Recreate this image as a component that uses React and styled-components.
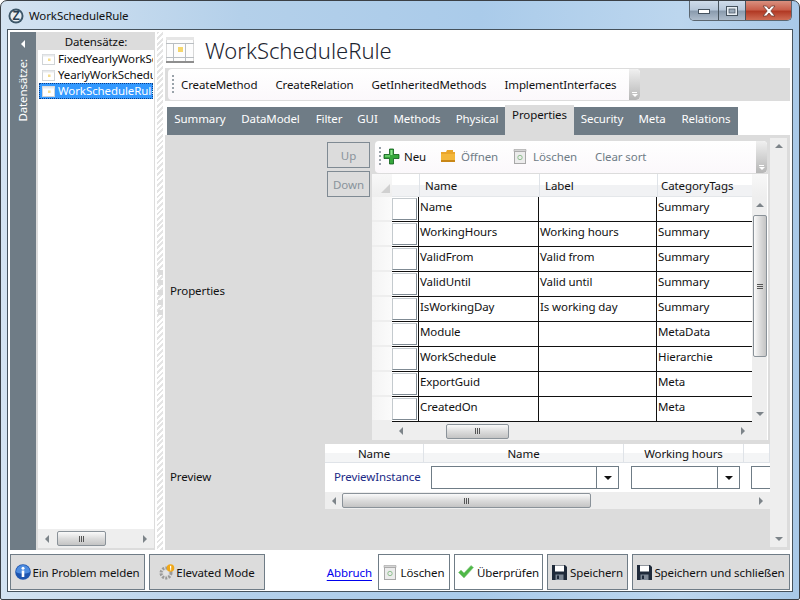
import React from 'react';
import styled, { createGlobalStyle } from 'styled-components';

const Global = createGlobalStyle`
  html, body { margin: 0; padding: 0; background: #fff; }
  * { box-sizing: border-box; }
  body { font-family: "Noto Sans", "Open Sans", sans-serif; font-size: 11.5px; letter-spacing: -0.1px; color: #111; }
  svg { flex: none; }
`;

const slate = '#6f7c86';
const panel = '#dcdcdc';
const barBg = '#eeeeee';

const Frame = styled.div`
  width: 800px;
  height: 600px;
  overflow: hidden;
  display: flex;
  flex-direction: column;
  border: 1px solid #3b4046;
  border-radius: 7px 7px 2px 2px;
  background: linear-gradient(90deg, #d4e3f1 0%, #b4d0ea 30%, #aacbea 60%, #bcd6ee 85%, #a9c9e8 100%);
`;

const TitleBar = styled.div`
  height: 28px;
  flex: none;
  display: flex;
  align-items: flex-start;
  padding-left: 7px;
`;

const LogoWrap = styled.div`
  margin-top: 7px;
  height: 16px;
  flex: none;
`;

const TitleText = styled.div`
  line-height: 29px;
  margin-left: 5px;
  color: #111;
`;

const WinButtons = styled.div`
  margin-left: auto;
  margin-right: 7px;
  display: flex;
  height: 20px;
  border: 1px solid #5b6670;
  border-top: 0;
  border-radius: 0 0 5px 5px;
  overflow: hidden;
`;

const WinButton = styled.div`
  width: ${p => p.$w}px;
  display: flex;
  align-items: center;
  justify-content: center;
  border-left: ${p => (p.$first ? '0' : '1px solid #46525c')};
  background: ${p => (p.$close
    ? 'linear-gradient(#d9907f 0%, #c9604c 45%, #b23a25 55%, #cf6d55 100%)'
    : 'linear-gradient(#cfdcea 0%, #b8c8da 45%, #8b9cae 55%, #aebccb 100%)')};
`;

const Client = styled.div`
  flex: none;
  margin: 0 6px;
  height: 563px;
  border: 1px solid #46525c;
  background: #fff;
  padding: 2px 2px 0 2px;
  display: flex;
  flex-direction: column;
`;

const Work = styled.div`
  height: 518px;
  flex: none;
  display: flex;
`;

const CollapseBar = styled.div`
  width: 26px;
  flex: none;
  background: ${slate};
  display: flex;
  flex-direction: column;
  align-items: center;
  padding-top: 8px;
  gap: 11px;
  color: #fff;
`;

const VerticalLabel = styled.div`
  writing-mode: vertical-rl;
  transform: rotate(180deg);
  line-height: 14px;
`;

const SidePanel = styled.div`
  width: 119px;
  flex: none;
  background: ${panel};
  padding: 0 1px 2px 2px;
  display: flex;
  flex-direction: column;
`;

const SideHeader = styled.div`
  height: 18px;
  line-height: 20px;
  text-align: center;
  flex: none;
`;

const SideList = styled.div`
  flex: 1;
  background: #fff;
  display: flex;
  flex-direction: column;
  overflow: hidden;
`;

const SideItems = styled.div`
  flex: 1;
  padding: 1px 1px 0;
`;

const SideItem = styled.div`
  height: 16px;
  display: flex;
  align-items: center;
  padding-left: 3px;
  gap: 3px;
  white-space: nowrap;
  overflow: hidden;
  line-height: 16px;
  color: ${p => (p.$selected ? '#fff' : '#111')};
  background: ${p => (p.$selected ? '#3399ff' : 'transparent')};
  outline: ${p => (p.$selected ? '1px dotted #0a3f8c' : 'none')};
  outline-offset: -1px;
`;

const Splitter = styled.div`
  width: 10px;
  flex: none;
  display: flex;
  flex-direction: column;
  align-items: center;
  justify-content: center;
  gap: 5px;
  padding-top: 2px;
  background: repeating-linear-gradient(135deg, #e4e4e4 0 2px, #fff 2px 4px);
  background-size: 6px 100%;
  background-repeat: no-repeat;
  background-position: 2px 0;
`;

const Grip = styled.div`
  width: 5px;
  height: 5px;
  background: ${panel};
`;

const Main = styled.div`
  width: 625px;
  flex: none;
  display: flex;
  flex-direction: column;
`;

const Heading = styled.div`
  height: 36px;
  flex: none;
  display: flex;
  align-items: center;
  gap: 11px;
  padding-left: 1px;
`;

const HeadingText = styled.div`
  font-size: 22px;
  letter-spacing: 0;
  font-weight: 300;
  color: #1c2430;
  line-height: 36px;
`;

const ToolBand = styled.div`
  height: 33px;
  flex: none;
  background: ${panel};
  padding: 1px 0 1px 3px;
  display: flex;
`;

const ToolBox = styled.div`
  display: flex;
  align-items: center;
  height: ${p => p.$h}px;
  width: ${p => p.$w}px;
  flex: none;
  background: linear-gradient(#ffffff, #fbf8fb);
  border-radius: 4px;
  overflow: hidden;
`;

const ToolDots = styled.div`
  width: 2px;
  height: 20px;
  margin-left: 4px;
  flex: none;
  background: repeating-linear-gradient(#9aa3aa 0 2px, transparent 2px 4px);
`;

const ToolItems = styled.div`
  flex: 1;
  display: flex;
  align-items: center;
  gap: ${p => p.$gap}px;
  padding-left: ${p => p.$pad}px;
  padding-bottom: ${p => p.$lift || 0}px;
`;

const ToolAction = styled.div`
  display: flex;
  align-items: center;
  gap: ${p => p.$gap || 5}px;
  margin-left: ${p => p.$push || 0}px;
  white-space: nowrap;
  color: ${p => (p.$disabled ? '#6f7c86' : '#111')};
`;

const ToolOverflow = styled.div`
  width: 11px;
  height: 100%;
  flex: none;
  margin-left: auto;
  background: linear-gradient(#f0f0f0, #b6b6b6);
  border-radius: 0 4px 4px 0;
  display: flex;
  flex-direction: column;
  align-items: center;
  justify-content: flex-end;
  padding-bottom: 3px;
  gap: 1px;
`;

const OverflowBar = styled.div`
  width: 5px;
  height: 1px;
  background: #fff;
`;

const OverflowArrow = styled.div`
  width: 0;
  height: 0;
  border-left: 3px solid transparent;
  border-right: 3px solid transparent;
  border-top: 3px solid #fff;
`;

const TabStrip = styled.div`
  margin: 6px 0 0 2px;
  height: 28px;
  flex: none;
  width: 571px;
  display: flex;
  background: ${slate};
`;

const Tab = styled.div`
  width: ${p => p.$w}px;
  flex: none;
  text-align: center;
  white-space: nowrap;
  color: ${p => (p.$active ? '#111' : '#fff')};
  background: ${p => (p.$active ? panel : 'transparent')};
  margin-top: ${p => (p.$active ? '-2px' : '0')};
  height: ${p => (p.$active ? '30px' : '28px')};
  line-height: ${p => (p.$active ? '19px' : '23px')};
`;

const TabBody = styled.div`
  flex: 1;
  background: ${panel};
  display: flex;
  min-height: 0;
  padding-right: 2px;
`;

const FormArea = styled.div`
  width: 605px;
  flex: none;
  display: flex;
  flex-direction: column;
  padding-top: 6px;
  gap: 4px;
`;

const FormRow = styled.div`
  display: grid;
  grid-template-columns: 160px 1fr;
  height: ${p => p.$h}px;
  flex: none;
`;

const FormLabel = styled.div`
  display: flex;
  align-items: center;
  padding-left: 5px;
`;

const PropsValue = styled.div`
  display: flex;
  padding: 0 2px;
  gap: 2px;
`;

const UpDown = styled.div`
  width: 43px;
  flex: none;
  padding-top: 1px;
  display: flex;
  flex-direction: column;
  gap: 3px;
`;

const SmallButton = styled.div`
  height: 26px;
  border: 1px solid #7f8a93;
  display: flex;
  align-items: center;
  justify-content: center;
  color: #89939b;
`;

const GridColumn = styled.div`
  flex: 1;
  display: flex;
  flex-direction: column;
  min-width: 0;
`;

const ToolOffset = styled.div`
  padding: 0 0 1px 3px;
  flex: none;
`;

const DataGrid = styled.div`
  flex: 1;
  display: grid;
  grid-template-columns: 20px 27px 120px 118px 95px 15px;
  grid-template-rows: 23px repeat(9, 25px) 18px;
  background: #fff;
`;

const Corner = styled.div`
  background: linear-gradient(#f8f8f8, #eeeeee);
  display: flex;
  align-items: flex-end;
  justify-content: flex-end;
  padding: 0 2px 4px 0;
`;

const CornerMark = styled.div`
  width: 0;
  height: 0;
  border-left: 9px solid transparent;
  border-bottom: 9px solid #d0d0d0;
`;

const HeadCell = styled.div`
  background: linear-gradient(#ffffff 50%, #f1f2f4 50%);
  border-left: ${p => (p.$plain ? '0' : '1px solid #dfe3e8')};
  border-bottom: 1px solid #e4e7ea;
  padding-left: ${p => p.$pad || 5}px;
  line-height: 23px;
  white-space: nowrap;
`;

const RowGutter = styled.div`
  background: linear-gradient(90deg, #f4f4f4, #fbfbfb);
  border-bottom: 2px solid #eeeeee;
`;

const RowSelector = styled.div`
  padding: 1px 1px 1px 0;
  border-bottom: 1px solid #111;
  border-right: 1px solid #111;
  background: #fff;
`;

const SelectorBox = styled.div`
  height: 100%;
  border: 1px solid #7f8a93;
  border-left-color: #c4cace;
  border-top-color: #c4cace;
`;

const Cell = styled.div`
  border-bottom: 1px solid #111;
  border-right: ${p => (p.$last ? '0' : '1px solid #111')};
  padding-left: 1px;
  line-height: 19px;
  white-space: nowrap;
  overflow: hidden;
`;

const VBar = styled.div`
  grid-column: 6;
  grid-row: 2 / 11;
  background: ${barBg};
  display: flex;
  flex-direction: column;
  align-items: center;
`;

const GridHBarSpacer = styled.div`
  background: ${barBg};
`;

const GridHBar = styled.div`
  grid-column: 2 / 6;
  background: ${barBg};
  display: flex;
  align-items: center;
  height: 18px;
`;

const GridCornerEnd = styled.div`
  background: ${barBg};
`;

const Arrow = styled.div`
  width: 0;
  height: 0;
  flex: none;
  ${p => p.$dir === 'up' && `border-left: 4px solid transparent; border-right: 4px solid transparent; border-bottom: 4px solid ${p.$color || '#7d8489'};`}
  ${p => p.$dir === 'down' && `border-left: 4px solid transparent; border-right: 4px solid transparent; border-top: 4px solid ${p.$color || '#7d8489'};`}
  ${p => p.$dir === 'left' && `border-top: 4px solid transparent; border-bottom: 4px solid transparent; border-right: 4px solid ${p.$color || '#7d8489'};`}
  ${p => p.$dir === 'right' && `border-top: 4px solid transparent; border-bottom: 4px solid transparent; border-left: 4px solid ${p.$color || '#7d8489'};`}
`;

const HTrack = styled.div`
  flex: 1;
  height: 100%;
  display: flex;
  align-items: center;
  padding: 0 7px;
`;

const HThumbSlot = styled.div`
  flex: 1;
  min-width: 0;
  padding-left: ${p => p.$before}px;
  padding-right: ${p => p.$after}px;
`;

const HThumb = styled.div`
  height: 15px;
  border: 1px solid #8a9299;
  border-radius: 2px;
  background: linear-gradient(#fafafa, #dcdcdc 50%, #c4c4c4);
  display: flex;
  align-items: center;
  justify-content: center;
  gap: 1px;
`;

const GripLine = styled.div`
  width: 1px;
  height: 6px;
  background: #555;
`;

const VThumb = styled.div`
  width: 14px;
  height: 142px;
  margin-top: 8px;
  border: 1px solid #8a9299;
  border-radius: 2px;
  background: linear-gradient(90deg, #fafafa, #dcdcdc 50%, #c4c4c4);
  display: flex;
  flex-direction: column;
  align-items: center;
  justify-content: center;
  gap: 1px;
`;

const VGripLine = styled.div`
  width: 6px;
  height: 1px;
  background: #555;
`;

const VBarFill = styled.div`
  flex: 1;
`;

const ArrowTop = styled.div`
  padding: 6px 0 0;
  line-height: 0;
`;

const ArrowBottom = styled.div`
  padding: 0 0 6px;
  line-height: 0;
`;

const PreviewBox = styled.div`
  display: flex;
  flex-direction: column;
  overflow: hidden;
  width: 445px;
`;

const PreviewHead = styled.div`
  display: grid;
  grid-template-columns: 99px 200px 120px 26px;
  height: 19px;
  flex: none;
  background: linear-gradient(#ffffff 50%, #f4f5f6 50%);
  border-bottom: 1px solid #dfe3e8;
`;

const PreviewHeadCell = styled.div`
  text-align: center;
  line-height: 19px;
  border-right: 1px solid #dfe3e8;
`;

const PreviewRow = styled.div`
  display: grid;
  grid-template-columns: 99px 200px 120px 26px;
  height: 29px;
  flex: none;
  background: #fff;
  align-items: center;
`;

const PreviewName = styled.div`
  padding-left: 9px;
  color: #1b2a86;
  white-space: nowrap;
  margin-top: -2px;
`;

const ComboCell = styled.div`
  padding-left: 7px;
  padding-right: ${p => p.$right}px;
`;

const Combo = styled.div`
  height: 23px;
  border: 1px solid ${slate};
  display: flex;
  justify-content: flex-end;
  ${p => p.$open && 'border-right: 0;'}
`;

const ComboButton = styled.div`
  width: 22px;
  border-left: 1px solid ${slate};
  display: flex;
  align-items: center;
  justify-content: center;
`;

const ComboArrow = styled.div`
  width: 0;
  height: 0;
  border-left: 4px solid transparent;
  border-right: 4px solid transparent;
  border-top: 4px solid #111;
`;

const HBarRow = styled.div`
  height: ${p => p.$h}px;
  flex: none;
  background: ${barBg};
  display: flex;
  align-items: center;
`;

const PageBar = styled.div`
  width: 17px;
  flex: none;
  margin: 3px 0;
  background: ${barBg};
  display: flex;
  flex-direction: column;
  align-items: center;
  justify-content: space-between;
  padding: 6px 0;
`;

const Footer = styled.div`
  flex: none;
  display: flex;
  padding-top: 4px;
  height: 41px;
  align-items: flex-start;
`;

const FootGroup = styled.div`
  display: flex;
  gap: 4px;
  align-items: center;
`;

const FootSpacer = styled.div`
  flex: 1;
`;

const FootButton = styled.div`
  height: 36px;
  width: ${p => p.$w}px;
  flex: none;
  border: 1px solid ${slate};
  background: ${p => (p.$white ? '#fff' : panel)};
  display: flex;
  align-items: center;
  justify-content: center;
  gap: ${p => p.$gap || 1}px;
  white-space: nowrap;
  color: #111;
`;

const CancelLink = styled.a`
  color: #0000ee;
  text-decoration: underline;
  margin-right: 2px;
  text-underline-offset: 3px;
`;

const Hbar = ({ before, after }) => (
  <HTrack>
    <Arrow $dir="left" />
    <HThumbSlot $before={before} $after={after}>
      <HThumb><GripLine /><GripLine /><GripLine /></HThumb>
    </HThumbSlot>
    <Arrow $dir="right" />
  </HTrack>
);

const RecordIcon = () => (
  <svg width="13" height="13" viewBox="0 0 13 13">
    <rect x="0.5" y="1.5" width="12" height="10" fill="#fff" stroke="#cfd3d6" />
    <rect x="0.5" y="1.5" width="12" height="2" fill="#e8eaec" />
    <rect x="6" y="5.5" width="2.5" height="2.5" fill="#f5dc8c" />
  </svg>
);

const LogoIcon = () => (
  <svg width="16" height="16" viewBox="0 0 16 16">
    <circle cx="8" cy="8" r="7.5" fill="#3c5668" />
    <circle cx="8" cy="8" r="5.6" fill="#e9eef2" />
    <text x="8" y="12" textAnchor="middle" fontSize="12" fontWeight="700" fontFamily="Liberation Sans" fill="#2a3f50">Z</text>
  </svg>
);

const HeadingIcon = () => (
  <svg width="28" height="26" viewBox="0 0 28 26">
    <rect x="0.5" y="0.5" width="27" height="24" fill="#fdfdfd" stroke="#d8d8d8" />
    <rect x="0" y="0" width="28" height="3" fill="#e6e6e6" />
    <rect x="0" y="24" width="28" height="2" fill="#8e8e8e" />
    <path d="M0 6.5H28M0 20.5H28M7.5 6V24M19.5 6V24" stroke="#b9bec2" fill="none" />
    <rect x="12" y="10" width="5" height="5" fill="#f5d76e" />
  </svg>
);

const PlusIcon = () => (
  <svg width="17" height="17" viewBox="0 0 17 17">
    <path d="M6.5 1h4v5.5H16v4h-5.5V16h-4v-5.5H1v-4h5.5z" fill="#36a83c" stroke="#0c5a18" strokeWidth="0.8" />
    <path d="M7.5 2h2v5h-2zM2 7.5h5v1H2z" fill="#8fe38f" />
  </svg>
);

const FolderIcon = () => (
  <svg width="14" height="12" viewBox="0 0 14 12">
    <path d="M0 2h5l1-2h6v2h2v10H0z" fill="#e9a52a" />
    <rect x="0" y="4" width="14" height="8" fill="#f4b73a" />
    <rect x="0" y="10" width="14" height="2" fill="#c98716" />
  </svg>
);

const TrashIcon = () => (
  <svg width="14" height="16" viewBox="0 0 14 16">
    <rect x="1.5" y="3.5" width="11" height="12" fill="#ececec" stroke="#a8a8a8" />
    <path d="M1 1.5h12v2H1z" fill="#d4d4d4" stroke="#a0a0a0" strokeWidth="0.6" />
    <circle cx="7" cy="9.5" r="2.2" fill="none" stroke="#8fbf8f" />
  </svg>
);

const InfoIcon = () => (
  <svg width="16" height="16" viewBox="0 0 16 16">
    <circle cx="8" cy="8" r="7.8" fill="#1d55b0" />
    <path d="M1 8a7 7 0 0 1 14 0c-3 2-11 2-14 0z" fill="#4d8ce0" />
    <rect x="6.7" y="6.5" width="2.6" height="6.5" fill="#fff" />
    <circle cx="8" cy="4.2" r="1.5" fill="#fff" />
  </svg>
);

const GearIcon = () => (
  <svg width="16" height="16" viewBox="0 0 16 16">
    <circle cx="7" cy="9" r="5" fill="none" stroke="#9a9a9a" strokeWidth="3" strokeDasharray="2 1.2" />
    <circle cx="7" cy="9" r="2.4" fill="#e4e4e4" />
    <circle cx="11.5" cy="4" r="3.8" fill="#f0a818" />
    <rect x="11" y="1.8" width="1.2" height="3" fill="#fff" />
    <rect x="11" y="5.3" width="1.2" height="1.1" fill="#fff" />
  </svg>
);

const CheckIcon = () => (
  <svg width="16" height="14" viewBox="0 0 16 14">
    <path d="M0.5 7.5L3 5l3 3 7-7.5 2.5 2L6 13z" fill="#4fb848" stroke="#8fc98c" strokeWidth="0.6" />
  </svg>
);

const FloppyIcon = () => (
  <svg width="15" height="15" viewBox="0 0 15 15">
    <path d="M0 0h13l2 2v13H0z" fill="#1f2a3a" />
    <rect x="3" y="0.5" width="9" height="6" fill="#fff" />
    <rect x="3.5" y="9.5" width="8" height="5.5" fill="#7d8794" />
    <rect x="5" y="10.5" width="2" height="3.5" fill="#1f2a3a" />
  </svg>
);

const rows = [
  ['Name', '', 'Summary'],
  ['WorkingHours', 'Working hours', 'Summary'],
  ['ValidFrom', 'Valid from', 'Summary'],
  ['ValidUntil', 'Valid until', 'Summary'],
  ['IsWorkingDay', 'Is working day', 'Summary'],
  ['Module', '', 'MetaData'],
  ['WorkSchedule', '', 'Hierarchie'],
  ['ExportGuid', '', 'Meta'],
  ['CreatedOn', '', 'Meta'],
];

const tabs = [
  ['Summary', 66], ['DataModel', 75], ['Filter', 42], ['GUI', 35], ['Methods', 64],
  ['Physical', 56], ['Properties', 69, true], ['Security', 56], ['Meta', 44], ['Relations', 64],
];

export default function App() {
  return (
    <Frame>
      <Global />
      <TitleBar>
        <LogoWrap><LogoIcon /></LogoWrap>
        <TitleText>WorkScheduleRule</TitleText>
        <WinButtons>
          <WinButton $w={28} $first>
            <svg width="12" height="6" viewBox="0 0 12 6"><rect x="0.5" y="1.5" width="11" height="4" fill="#fff" stroke="#45525e" /></svg>
          </WinButton>
          <WinButton $w={27}>
            <svg width="12" height="10" viewBox="0 0 12 10"><rect x="0.5" y="0.5" width="11" height="9" fill="#e8eef4" stroke="#45525e" /><rect x="3" y="3" width="6" height="4" fill="#9aa9b8" stroke="#45525e" strokeWidth="0.7" /></svg>
          </WinButton>
          <WinButton $w={46} $close>
            <svg width="16" height="12" viewBox="0 0 16 12"><path d="M2 1h3.5L8 4l2.5-3H14l-4.2 5L14 11h-3.5L8 8l-2.5 3H2l4.2-5z" fill="#fff" stroke="#6a3a30" strokeWidth="0.8" /></svg>
          </WinButton>
        </WinButtons>
      </TitleBar>

      <Client>
        <Work>
          <CollapseBar>
            <Arrow $dir="left" $color="#fff" />
            <VerticalLabel>Datensätze:</VerticalLabel>
          </CollapseBar>

          <SidePanel>
            <SideHeader>Datensätze:</SideHeader>
            <SideList>
              <SideItems>
                <SideItem><RecordIcon />FixedYearlyWorkSchedule</SideItem>
                <SideItem><RecordIcon />YearlyWorkSchedule</SideItem>
                <SideItem $selected><RecordIcon />WorkScheduleRule</SideItem>
              </SideItems>
              <HBarRow $h={19}>
                <Hbar before={8} after={37} />
              </HBarRow>
            </SideList>
          </SidePanel>

          <Splitter>
            <Grip /><Grip /><Grip /><Grip /><Grip />
          </Splitter>

          <Main>
            <Heading>
              <HeadingIcon />
              <HeadingText>WorkScheduleRule</HeadingText>
            </Heading>

            <ToolBand>
              <ToolBox $w={472} $h={31}>
                <ToolDots />
                <ToolItems $gap={18} $pad={7}>
                  <ToolAction>CreateMethod</ToolAction>
                  <ToolAction>CreateRelation</ToolAction>
                  <ToolAction>GetInheritedMethods</ToolAction>
                  <ToolAction>ImplementInterfaces</ToolAction>
                </ToolItems>
                <ToolOverflow><OverflowBar /><OverflowArrow /></ToolOverflow>
              </ToolBox>
            </ToolBand>

            <TabStrip>
              {tabs.map(([label, w, active]) => (
                <Tab key={label} $w={w} $active={active}>{label}</Tab>
              ))}
            </TabStrip>

            <TabBody>
              <FormArea>
                <FormRow $h={299}>
                  <FormLabel>Properties</FormLabel>
                  <PropsValue>
                    <UpDown>
                      <SmallButton>Up</SmallButton>
                      <SmallButton>Down</SmallButton>
                    </UpDown>
                    <GridColumn>
                      <ToolOffset>
                        <ToolBox $w={392} $h={32}>
                          <ToolDots />
                          <ToolItems $gap={15} $pad={2} $lift={2}>
                            <ToolAction $gap={4}><PlusIcon />Neu</ToolAction>
                            <ToolAction $disabled $gap={6}><FolderIcon />Öffnen</ToolAction>
                            <ToolAction $disabled $gap={6}><TrashIcon />Löschen</ToolAction>
                            <ToolAction $disabled $push={3}>Clear sort</ToolAction>
                          </ToolItems>
                          <ToolOverflow><OverflowBar /><OverflowArrow /></ToolOverflow>
                        </ToolBox>
                      </ToolOffset>
                      <DataGrid>
                        <Corner><CornerMark /></Corner>
                        <HeadCell $plain />
                        <HeadCell>Name</HeadCell>
                        <HeadCell>Label</HeadCell>
                        <HeadCell $pad={3}>CategoryTags</HeadCell>
                        <Corner />
                        {rows.map(([name, label, tag]) => (
                          <React.Fragment key={name}>
                            <RowGutter />
                            <RowSelector><SelectorBox /></RowSelector>
                            <Cell>{name}</Cell>
                            <Cell>{label}</Cell>
                            <Cell $last>{tag}</Cell>
                          </React.Fragment>
                        ))}
                        <VBar>
                          <ArrowTop><Arrow $dir="up" /></ArrowTop>
                          <VThumb><VGripLine /><VGripLine /><VGripLine /></VThumb>
                          <VBarFill />
                          <ArrowBottom><Arrow $dir="down" /></ArrowBottom>
                        </VBar>
                        <GridHBarSpacer />
                        <GridHBar>
                          <Hbar before={43} after={232} />
                        </GridHBar>
                        <GridCornerEnd />
                      </DataGrid>
                    </GridColumn>
                  </PropsValue>
                </FormRow>

                <FormRow $h={65}>
                  <FormLabel>Preview</FormLabel>
                  <PreviewBox>
                    <PreviewHead>
                      <PreviewHeadCell>Name</PreviewHeadCell>
                      <PreviewHeadCell>Name</PreviewHeadCell>
                      <PreviewHeadCell>Working hours</PreviewHeadCell>
                      <PreviewHeadCell />
                    </PreviewHead>
                    <PreviewRow>
                      <PreviewName>PreviewInstance</PreviewName>
                      <ComboCell $right={5}><Combo><ComboButton><ComboArrow /></ComboButton></Combo></ComboCell>
                      <ComboCell $right={4}><Combo><ComboButton><ComboArrow /></ComboButton></Combo></ComboCell>
                      <ComboCell $right={0}><Combo $open /></ComboCell>
                    </PreviewRow>
                    <HBarRow $h={17}>
                      <Hbar before={6} after={168} />
                    </HBarRow>
                  </PreviewBox>
                </FormRow>
              </FormArea>
              <PageBar>
                <Arrow $dir="up" />
                <Arrow $dir="down" />
              </PageBar>
            </TabBody>
          </Main>
        </Work>

        <Footer>
          <FootGroup>
            <FootButton $w={135}><InfoIcon />Ein Problem melden</FootButton>
            <FootButton $w={116}><GearIcon />Elevated Mode</FootButton>
          </FootGroup>
          <FootSpacer />
          <FootGroup>
            <CancelLink href="#">Abbruch</CancelLink>
            <FootButton $w={72} $white $gap={3}><TrashIcon />Löschen</FootButton>
            <FootButton $w={89} $white $gap={3}><CheckIcon />Überprüfen</FootButton>
            <FootButton $w={81} $gap={3}><FloppyIcon />Speichern</FootButton>
            <FootButton $w={158} $gap={2}><FloppyIcon />Speichern und schließen</FootButton>
          </FootGroup>
        </Footer>
      </Client>
    </Frame>
  );
}
